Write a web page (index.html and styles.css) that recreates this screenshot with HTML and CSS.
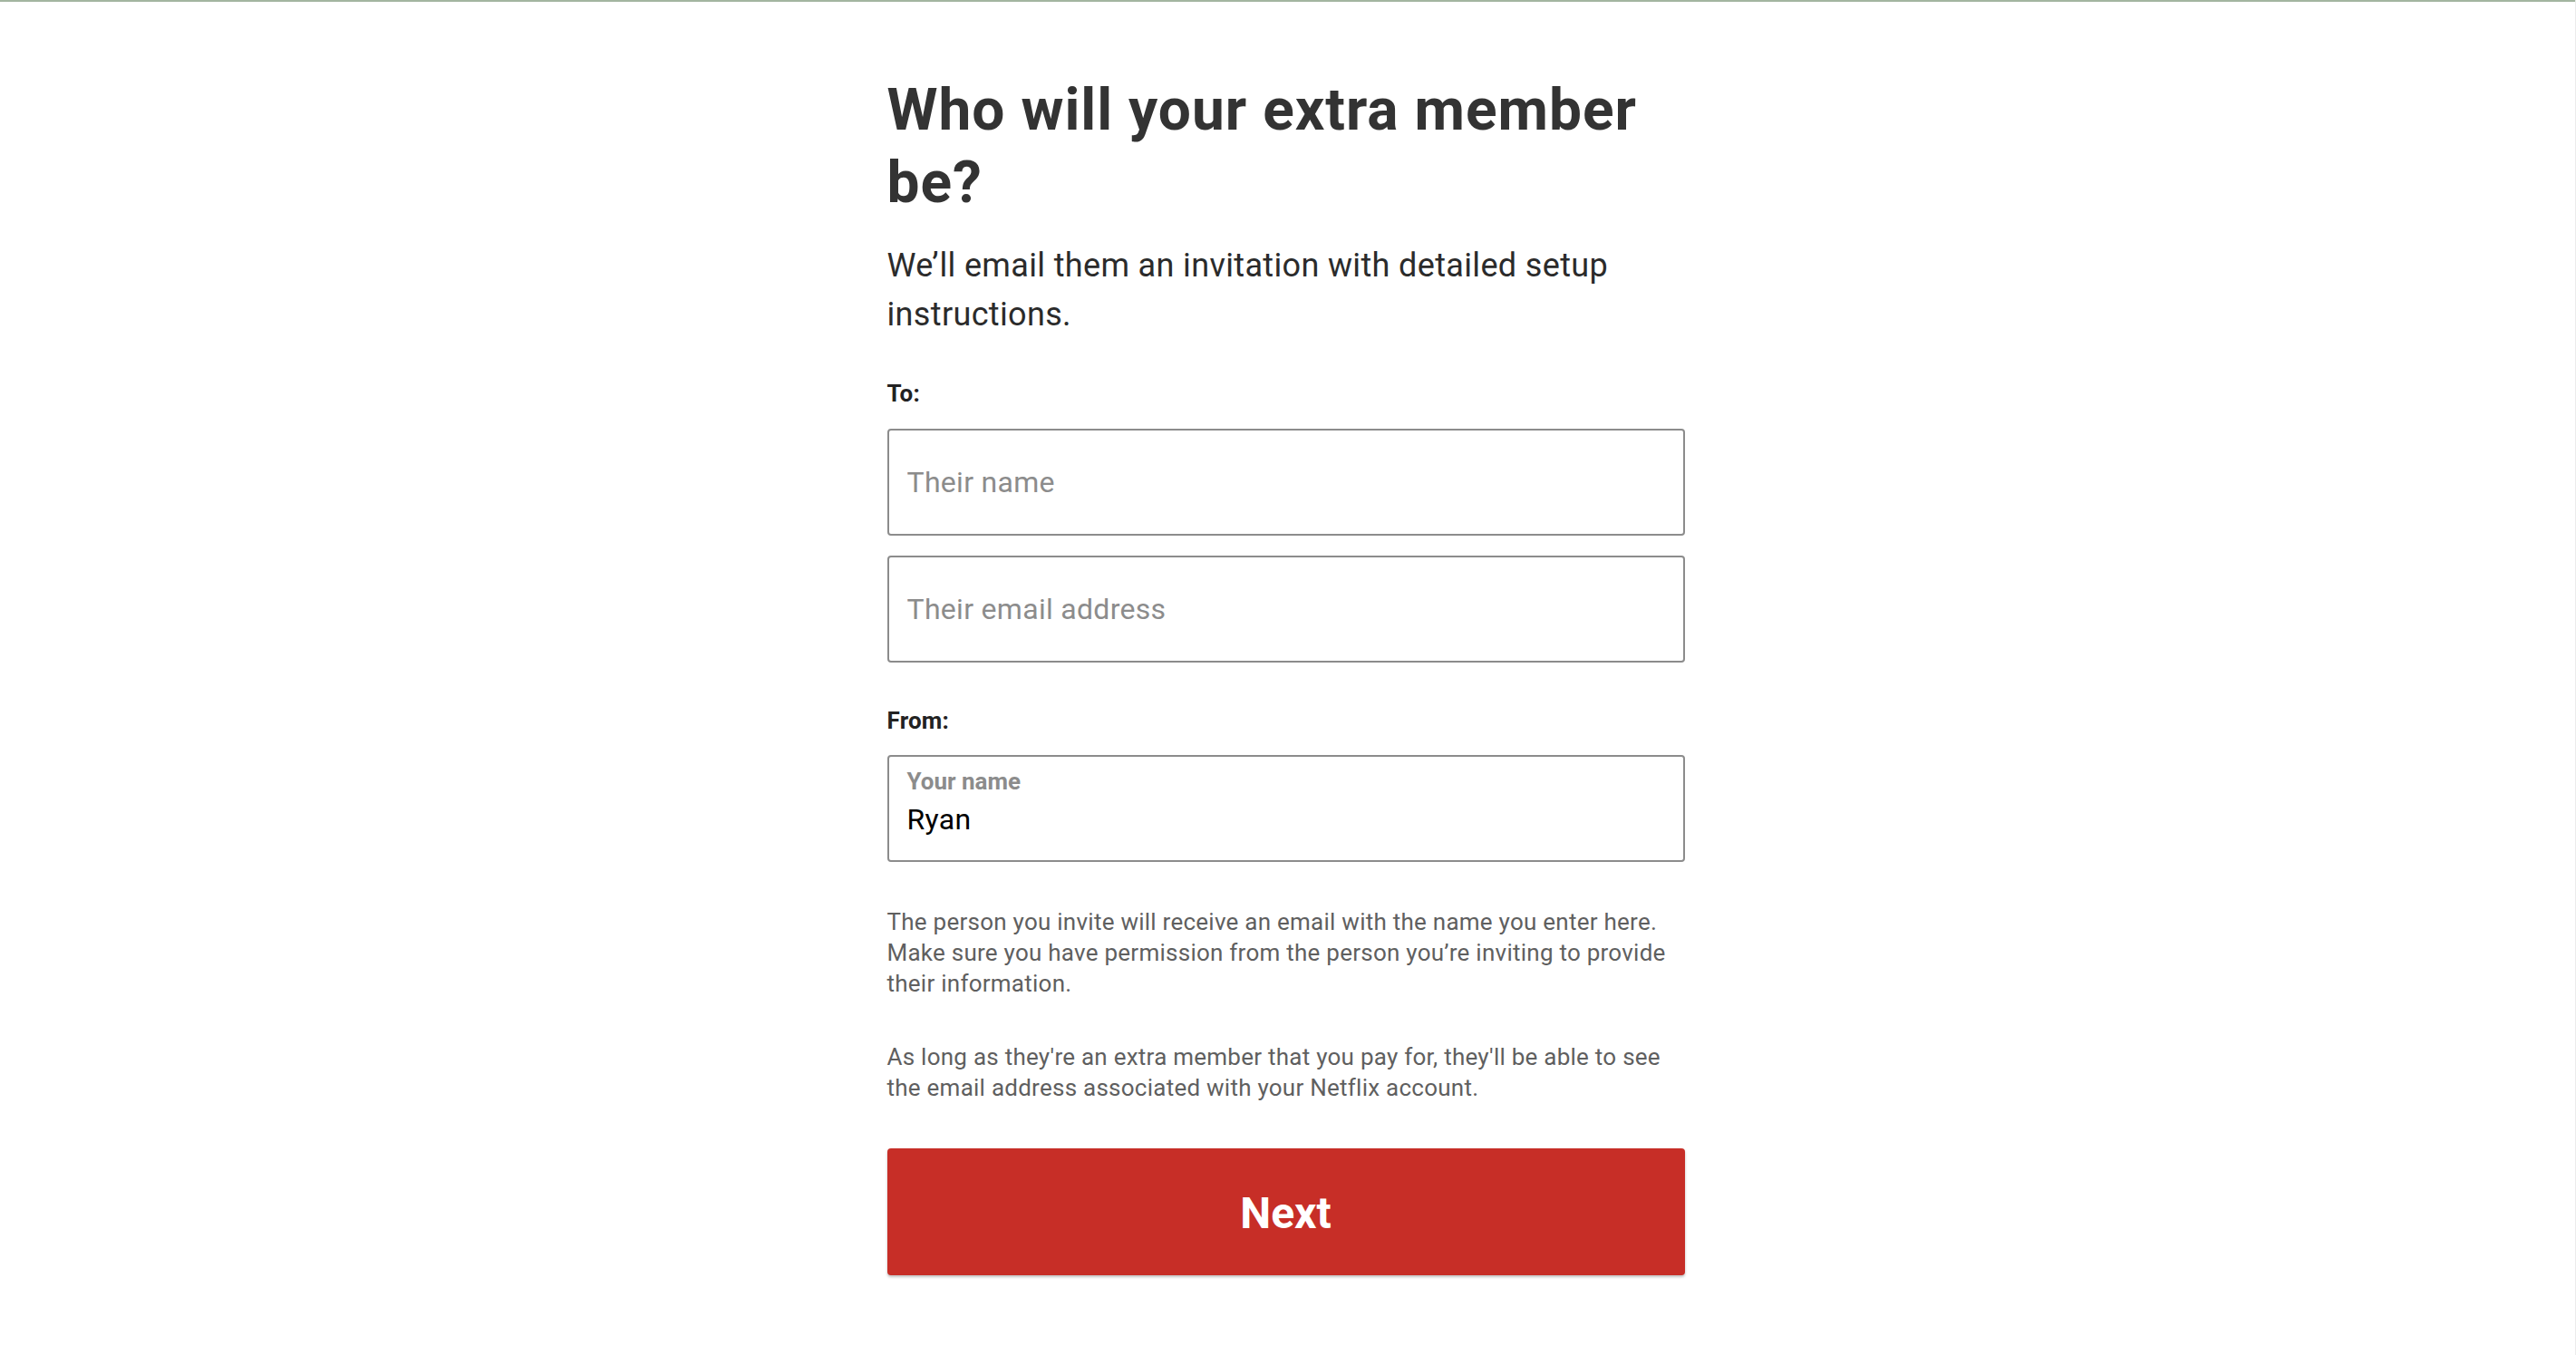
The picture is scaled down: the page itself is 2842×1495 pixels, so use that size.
FILE: index.html
```html
<!DOCTYPE html>
<html lang="en">
<head>
<meta charset="utf-8">
<title>Who will your extra member be?</title>
<link rel="stylesheet" href="styles.css">
</head>
<body>
<div class="topbar"></div>
<main class="page">
  <form class="card" onsubmit="return false">
    <h1 class="title">Who will your extra member be?</h1>
    <p class="subtitle">We’ll email them an invitation with detailed setup instructions.</p>

    <div class="section">
      <div class="label">To:</div>
      <div class="fields">
        <label class="field">
          <input class="input" type="text" placeholder="Their name">
        </label>
        <label class="field">
          <input class="input" type="email" placeholder="Their email address">
        </label>
      </div>
    </div>

    <div class="section section-from">
      <div class="label">From:</div>
      <label class="field field-filled">
        <span class="float-label">Your name</span>
        <input class="input input-filled" type="text" value="Ryan">
      </label>
    </div>

    <div class="notes">
      <p class="note">The person you invite will receive an email with the name you enter here. Make sure you have permission from the person you’re inviting to provide their information.</p>
      <p class="note">As long as they're an extra member that you pay for, they'll be able to see the email address associated with your Netflix account.</p>
    </div>

    <button class="next" type="submit">Next</button>
  </form>
</main>
</body>
</html>
```

FILE: styles.css
```css
* {
  box-sizing: border-box;
}

html, body {
  margin: 0;
  padding: 0;
  background: #ffffff;
}

body {
  font-family: Roboto, "Liberation Sans", Arial, sans-serif;
  color: #333333;
  min-height: 1495px;
  border-right: 1px solid #ececec;
}

.topbar {
  height: 2px;
  background: #a3b5a0;
}

.page {
  display: flex;
  justify-content: center;
  padding-top: 80px;
}

.card {
  width: 880px;
  display: flex;
  flex-direction: column;
  margin-left: -4px;
}

.title {
  margin: 0;
  font-size: 64px;
  line-height: 80px;
  font-weight: 700;
  color: #333333;
  letter-spacing: 1px;
}

.subtitle {
  margin: 24px 0 0;
  font-size: 36px;
  line-height: 54px;
  font-weight: 400;
  color: #2b2b2b;
  letter-spacing: 0.35px;
}

.section {
  margin-top: 44px;
  display: flex;
  flex-direction: column;
  gap: 23px;
}

.section-from {
  margin-top: 48px;
  gap: 22px;
}

.label {
  font-size: 26px;
  line-height: 32px;
  font-weight: 700;
  color: #222222;
  letter-spacing: 0.2px;
}

.fields {
  display: flex;
  flex-direction: column;
  gap: 22px;
}

.field {
  display: flex;
  flex-direction: column;
  justify-content: center;
  height: 118px;
  border: 2px solid #8c8c8c;
  border-radius: 4px;
  padding: 0 20px;
  background: #ffffff;
}

.input {
  border: 0;
  outline: none;
  padding: 0;
  margin: 0;
  background: transparent;
  font-family: inherit;
  font-size: 32px;
  line-height: 40px;
  height: 40px;
  color: #000000;
  width: 100%;
  letter-spacing: 0.3px;
}

.input::placeholder {
  color: #8c8c8c;
  opacity: 1;
}

.field-filled {
  justify-content: flex-start;
  padding-top: 12px;
}

.float-label {
  font-size: 26px;
  line-height: 30px;
  font-weight: 700;
  color: #8c8c8c;
}

.input-filled {
  margin-top: 7px;
}

.notes {
  margin-top: 49px;
  display: flex;
  flex-direction: column;
  gap: 47px;
}

.note {
  margin: 0;
  font-size: 26px;
  line-height: 34px;
  color: #5f5f5f;
  letter-spacing: 0.25px;
}

.next {
  margin-top: 50px;
  height: 140px;
  border: 0;
  border-radius: 4px;
  background: #c72e27;
  color: #ffffff;
  font-family: inherit;
  font-size: 48px;
  font-weight: 700;
  padding-top: 3px;
  cursor: pointer;
  box-shadow: 0 2px 3px rgba(0, 0, 0, 0.25);
}
```
